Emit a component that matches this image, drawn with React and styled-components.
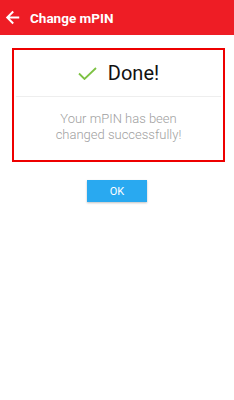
import styled, { createGlobalStyle } from "styled-components";

const Global = createGlobalStyle`
  body {
    margin: 0;
    background: #fff;
    font-family: Roboto, "Liberation Sans", sans-serif;
  }
`;

const Page = styled.div`
  width: 234px;
  min-height: 400px;
  display: flex;
  flex-direction: column;
`;

const Header = styled.div`
  height: 35px;
  background: #ee1d25;
  display: flex;
  align-items: center;
  padding-left: 3px;
  gap: 8px;
  color: #fff;
`;

const Title = styled.div`
  font-size: 13.5px;
  font-weight: 700;
`;

const Card = styled.div`
  margin: 13px 9px 0 12px;
  border: 2px solid #ee0000;
  height: 110px;
  display: flex;
  flex-direction: column;
`;

const Heading = styled.div`
  height: 46px;
  display: flex;
  align-items: center;
  justify-content: center;
  gap: 11px;
  font-size: 20px;
  color: #111;
  border-bottom: 1px solid #eeeeee;
  margin: 0 2px;
`;

const Message = styled.div`
  flex: 1;
  display: flex;
  align-items: center;
  justify-content: center;
  text-align: center;
  font-size: 13px;
  font-weight: 300;
  line-height: 16px;
  color: #a0a0a0;
  padding-bottom: 4px;
`;

const Actions = styled.div`
  display: flex;
  justify-content: center;
  padding-top: 18px;
`;

const Button = styled.button`
  width: 60px;
  height: 22px;
  border: none;
  background: #29a9f0;
  color: #fff;
  font-family: inherit;
  font-size: 11px;
  box-shadow: 0 1px 2px rgba(0, 0, 0, 0.25);
  padding: 0;
`;

const App = () => {
  return (
    <Page>
      <Global />
      <Header>
        <svg width="19" height="19" viewBox="0 0 24 24" fill="#fff">
          <path d="M20.5 10.8H8.4l5.4-5.4L12 3.6 3.6 12l8.4 8.4 1.8-1.8-5.4-5.4h12.1v-2.4z" />
        </svg>
        <Title>Change mPIN</Title>
      </Header>
      <Card>
        <Heading>
          <svg width="19" height="13" viewBox="0 0 19 13" fill="none">
            <path d="M1 6.5l5.5 5.5L18 1" stroke="#7dc243" strokeWidth="1.8" />
          </svg>
          Done!
        </Heading>
        <Message>
          Your mPIN has been
          <br />
          changed successfully!
        </Message>
      </Card>
      <Actions>
        <Button>OK</Button>
      </Actions>
    </Page>
  );
};

export default App;
